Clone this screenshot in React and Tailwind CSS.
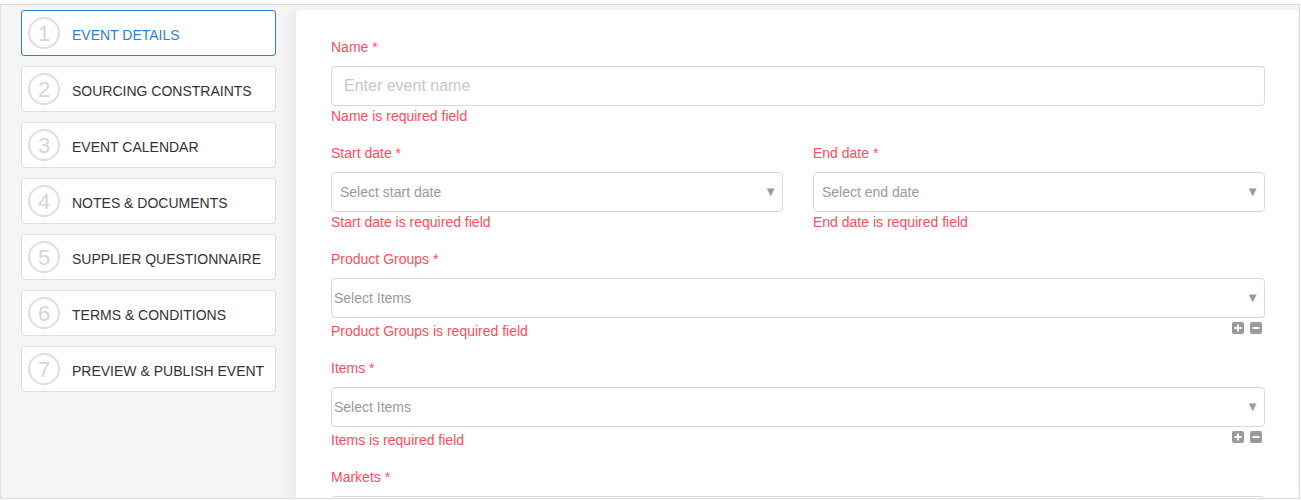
import React from 'react';

const steps = [
    'EVENT DETAILS',
    'SOURCING CONSTRAINTS',
    'EVENT CALENDAR',
    'NOTES & DOCUMENTS',
    'SUPPLIER QUESTIONNAIRE',
    'TERMS & CONDITIONS',
    'PREVIEW & PUBLISH EVENT',
];

const Label = ({ children }) => (
    <div className="text-[14px] leading-[20px] text-[#ff4d5e]">{children} *</div>
);

const Error = ({ children }) => (
    <div className="text-[14px] leading-[20px] text-[#ff4d5e]">{children}</div>
);

const Arrow = () => (
    <span className="absolute right-[5px] top-1/2 -translate-y-1/2 text-[13px] text-[#9a9a9a]">▼</span>
);

const DateSelect = ({ label, placeholder, error }) => (
    <div className="flex-1">
        <Label>{label}</Label>
        <div className="relative mt-[9px] h-[40px] rounded-[4px] border border-[#d9d9d9] bg-white flex items-center pl-[8px]">
            <span className="text-[14px] text-[#9a9a9a]">{placeholder}</span>
            <Arrow />
        </div>
        <Error>{error}</Error>
    </div>
);

const IconBtn = ({ minus }) => (
    <span className="w-[12px] h-[12px] rounded-[2px] bg-[#9a9a9a] flex items-center justify-center">
        <svg width="8" height="8" viewBox="0 0 8 8">
            <rect x="0.5" y="3" width="7" height="2" fill="#fff" />
            {!minus && <rect x="3" y="0.5" width="2" height="7" fill="#fff" />}
        </svg>
    </span>
);

const MultiSelect = ({ label, error }) => (
    <div>
        <Label>{label}</Label>
        <div className="relative mt-[9px] h-[40px] rounded-[4px] border border-[#d9d9d9] bg-white flex items-center pl-[2px]">
            <span className="text-[14px] text-[#9a9a9a]">Select Items</span>
            <Arrow />
        </div>
        <div className="mt-[3px] flex justify-between items-start">
            <Error>{error}</Error>
            <div className="flex gap-[6px] mt-[1px] mr-[3px]">
                <IconBtn />
                <IconBtn minus />
            </div>
        </div>
    </div>
);

const App = () => {
    return (
        <div className="w-[1301px] h-[500px] bg-white pt-[4px]" style={{ fontFamily: '"Liberation Sans", Arial, sans-serif' }}>
            <div className="w-[1300px] h-[495px] border border-[#dcdcdc] bg-[#f5f5f5] flex overflow-hidden">
                {/* Steps */}
                <div className="w-[255px] ml-[20px] mt-[5px] flex flex-col gap-[10px] shrink-0">
                    {steps.map((s, i) => (
                        <div
                            key={s}
                            className={`h-[46px] rounded-[3px] border bg-white flex items-center pl-[6px] ${
                                i === 0 ? 'border-[#2f7fd0]' : 'border-[#dddddd]'
                            }`}
                        >
                            <span className="w-[32px] h-[32px] rounded-full border-2 border-[#dedede] flex items-center justify-center text-[22px] text-[#d6d6d6] font-light">
                                {i + 1}
                            </span>
                            <span className={`ml-[12px] pt-[5px] text-[14px] ${i === 0 ? 'text-[#2f7fd0]' : 'text-[#333]'}`}>{s}</span>
                        </div>
                    ))}
                </div>

                {/* Form panel */}
                <div className="ml-[20px] mt-[5px] mr-[1px] flex-1 bg-white rounded-t-[4px] shadow-[-6px_0_10px_rgba(0,0,0,0.05)] pl-[35px] pr-[33px] pt-[27px]">
                    <div>
                        <Label>Name</Label>
                        <div className="mt-[9px] h-[40px] rounded-[4px] border border-[#d9d9d9] flex items-center pl-[12px]">
                            <span className="text-[16px] text-[#c8c8c8]">Enter event name</span>
                        </div>
                        <Error>Name is required field</Error>
                    </div>

                    <div className="mt-[17px] flex gap-[30px]">
                        <DateSelect label="Start date" placeholder="Select start date" error="Start date is required field" />
                        <DateSelect label="End date" placeholder="Select end date" error="End date is required field" />
                    </div>

                    <div className="mt-[17px]">
                        <MultiSelect label="Product Groups" error="Product Groups is required field" />
                    </div>

                    <div className="mt-[17px]">
                        <MultiSelect label="Items" error="Items is required field" />
                    </div>

                    <div className="mt-[17px]">
                        <Label>Markets</Label>
                        <div className="mt-[9px] h-[40px] rounded-[4px] border border-[#d9d9d9]" />
                    </div>
                </div>
            </div>
        </div>
    );
};

export default App;
